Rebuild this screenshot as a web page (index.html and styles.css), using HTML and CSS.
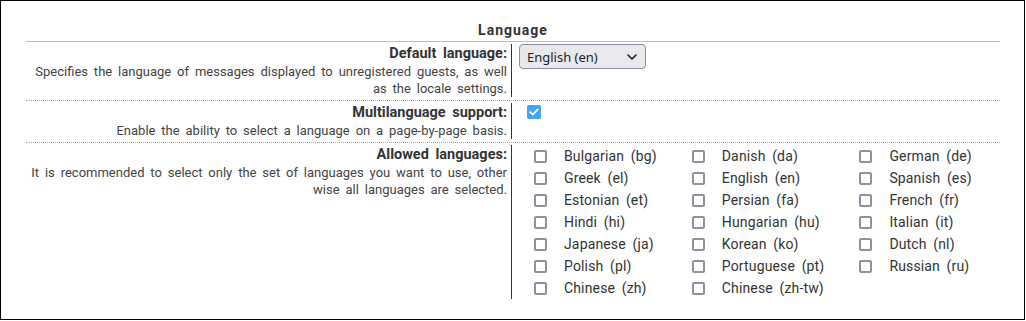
FILE: index.html
```html
<!DOCTYPE html>
<html lang="en">
<head>
<meta charset="utf-8">
<title>Language settings</title>
<link rel="stylesheet" href="styles.css">
</head>
<body>
<div class="frame">
  <div class="panel">
    <div class="panel-title">Language</div>

    <div class="row">
      <div class="label-cell">
        <div class="label">Default language:</div>
        <div class="desc">Specifies the language of messages displayed to unregistered guests, as well as the locale settings.</div>
      </div>
      <div class="value-cell">
        <div class="select">
          <span class="select-text">English (en)</span>
          <svg class="chevron" width="10" height="6" viewBox="0 0 10 6"><path d="M1 1l4 4 4-4" fill="none" stroke="#1b1b1f" stroke-width="1.6" stroke-linecap="round" stroke-linejoin="round"/></svg>
        </div>
      </div>
    </div>

    <div class="row">
      <div class="label-cell">
        <div class="label">Multilanguage support:</div>
        <div class="desc">Enable the ability to select a language on a page-by-page basis.</div>
      </div>
      <div class="value-cell value-check">
        <span class="cb cb-checked">
          <svg width="10" height="8" viewBox="0 0 10 8"><path d="M1.2 4.2l2.6 2.4L8.8 1.3" fill="none" stroke="#fff" stroke-width="1.8" stroke-linecap="round" stroke-linejoin="round"/></svg>
        </span>
      </div>
    </div>

    <div class="row row-last">
      <div class="label-cell">
        <div class="label">Allowed languages:</div>
        <div class="desc">It is recommended to select only the set of languages you want to use, other wise all languages are selected.</div>
      </div>
      <div class="value-cell value-langs">
        <div class="lang-grid">
          <div class="lang"><span class="cb"></span><span>Bulgarian (bg)</span></div>
          <div class="lang"><span class="cb"></span><span>Danish (da)</span></div>
          <div class="lang"><span class="cb"></span><span>German (de)</span></div>
          <div class="lang"><span class="cb"></span><span>Greek (el)</span></div>
          <div class="lang"><span class="cb"></span><span>English (en)</span></div>
          <div class="lang"><span class="cb"></span><span>Spanish (es)</span></div>
          <div class="lang"><span class="cb"></span><span>Estonian (et)</span></div>
          <div class="lang"><span class="cb"></span><span>Persian (fa)</span></div>
          <div class="lang"><span class="cb"></span><span>French (fr)</span></div>
          <div class="lang"><span class="cb"></span><span>Hindi (hi)</span></div>
          <div class="lang"><span class="cb"></span><span>Hungarian (hu)</span></div>
          <div class="lang"><span class="cb"></span><span>Italian (it)</span></div>
          <div class="lang"><span class="cb"></span><span>Japanese (ja)</span></div>
          <div class="lang"><span class="cb"></span><span>Korean (ko)</span></div>
          <div class="lang"><span class="cb"></span><span>Dutch (nl)</span></div>
          <div class="lang"><span class="cb"></span><span>Polish (pl)</span></div>
          <div class="lang"><span class="cb"></span><span>Portuguese (pt)</span></div>
          <div class="lang"><span class="cb"></span><span>Russian (ru)</span></div>
          <div class="lang"><span class="cb"></span><span>Chinese (zh)</span></div>
          <div class="lang"><span class="cb"></span><span>Chinese (zh-tw)</span></div>
        </div>
      </div>
    </div>
  </div>
</div>
</body>
</html>
```

FILE: styles.css
```css
html, body {
  margin: 0;
  padding: 0;
  background: #fff;
}

body {
  font-family: Roboto, "Liberation Sans", sans-serif;
  color: #333;
}

.frame {
  box-sizing: border-box;
  width: 1025px;
  height: 320px;
  border: 1px solid #000;
  padding: 20px 24px 0 25px;
}

.panel {
  width: 974px;
}

.panel-title {
  text-align: center;
  font-weight: bold;
  font-size: 14px;
  line-height: 18px;
  letter-spacing: 1px;
  padding-bottom: 2px;
  border-bottom: 1px solid #bcbcc4;
  color: #333;
}

.row {
  display: flex;
  padding: 2px 0 3px;
  border-bottom: 1px dotted #a8a8a8;
}

.row-last {
  border-bottom: none;
}

.label-cell {
  box-sizing: border-box;
  width: 486px;
  flex: none;
  padding-right: 4px;
  border-right: 1px solid #a00;
  text-align: right;
}

.label {
  font-weight: bold;
  font-size: 14.5px;
  line-height: 19px;
  word-spacing: 3px;
  color: #333;
}

.desc {
  font-size: 13px;
  line-height: 17px;
  word-spacing: 2.65px;
  color: #444;
}

.value-cell {
  flex: 1;
  padding-left: 7px;
}

.select {
  box-sizing: border-box;
  width: 127px;
  height: 25px;
  display: flex;
  align-items: center;
  justify-content: space-between;
  padding: 0 8px 0 7px;
  background: #e9e9ed;
  border: 1px solid #8f8f9d;
  border-radius: 4px;
  font-family: "Noto Sans", "DejaVu Sans", sans-serif;
  font-size: 13px;
  color: #1b1b1f;
}

.value-check {
  padding-left: 15px;
  padding-top: 2px;
}

.cb {
  box-sizing: border-box;
  display: inline-block;
  width: 13px;
  height: 13px;
  border: 2px solid #8f8f9d;
  border-radius: 2px;
  background: #fff;
  flex: none;
}

.cb-checked {
  width: 14px;
  height: 14px;
  border: none;
  border-radius: 2px;
  background: #42a6ee;
  display: flex;
  align-items: center;
  justify-content: center;
}

.value-langs {
  padding-left: 22px;
}

.lang-grid {
  display: grid;
  grid-template-columns: auto auto auto;
  justify-content: start;
  column-gap: 35px;
}

.lang {
  display: flex;
  align-items: center;
  height: 22px;
  font-size: 14px;
  word-spacing: 3px;
  letter-spacing: 0.15px;
  color: #333;
}

.lang .cb {
  margin-right: 17px;
}
```
